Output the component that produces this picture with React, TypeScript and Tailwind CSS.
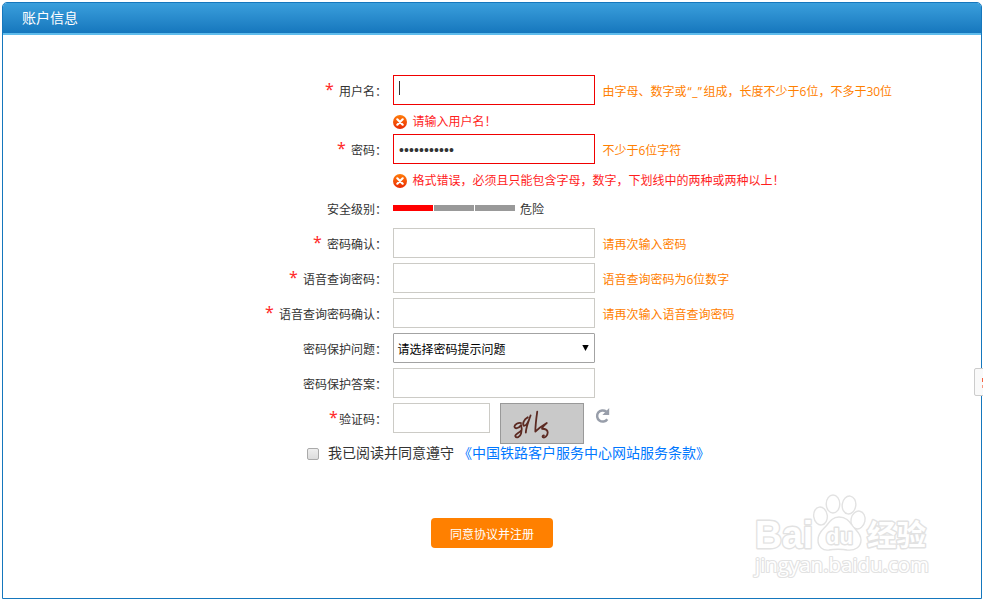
import type { ReactNode } from "react";

type RowProps = {
  label: string;
  required?: boolean;
  tight?: boolean;
  children: ReactNode;
};

function Row({ label, required, tight, children }: RowProps) {
  return (
    <div className="flex h-[35px] items-start">
      <div className="flex h-[30px] w-[384px] shrink-0 items-center justify-end whitespace-nowrap pt-[3px]">
        {required && (
          <span className={tight ? "mb-[5px] w-[10px] font-['Noto_Sans'] text-[16px] leading-none text-[#ff2a2a]" : "mb-[5px] w-[14px] font-['Noto_Sans'] text-[16px] leading-none text-[#ff2a2a]"}>*</span>
        )}
        <span>{label}</span>
      </div>
      <div className="ml-1.5 flex items-start">{children}</div>
    </div>
  );
}

function Hint({ children }: { children: ReactNode }) {
  return <span className="ml-[7.5px] flex h-[30px] items-center whitespace-pre pt-[3px] font-['Open_Sans','Noto_Sans_CJK_SC',sans-serif] text-[#ff8000]">{children}</span>;
}

function ErrorLine({ children }: { children: ReactNode }) {
  return (
    <div className="flex h-[29px] items-center pl-[390px] pt-[4px] text-[#ff1e1e]">
      <svg viewBox="0 0 14 14" className="mr-[5.5px] h-[14px] w-[14px]">
        <defs>
          <linearGradient id="err" x1="0" y1="0" x2="0" y2="1">
            <stop offset="0" stopColor="#ff7d0a" />
            <stop offset="1" stopColor="#ea2a04" />
          </linearGradient>
        </defs>
        <circle cx="7" cy="7" r="7" fill="url(#err)" />
        <path d="M4.3 4.3l5.4 5.4M9.7 4.3l-5.4 5.4" stroke="#fff" strokeWidth="2.2" strokeLinecap="round" />
      </svg>
      <span className="whitespace-nowrap">{children}</span>
    </div>
  );
}

function TextInput() {
  return <input type="text" className="h-[30px] w-[202px] border border-[#cccbc6] bg-white px-[5px] outline-none" />;
}

function Watermark() {
  return (
    <svg viewBox="0 0 190 96" className="pointer-events-none absolute left-[747px] top-[488px] h-[96px] w-[190px]" fill="#fff" stroke="#e2e2e2" strokeWidth="1.4" strokeLinejoin="round">
      <ellipse cx="73.5" cy="28" rx="6.8" ry="9" transform="rotate(-8 73.5 28)" />
      <ellipse cx="86" cy="16" rx="6.8" ry="9" />
      <ellipse cx="102" cy="17" rx="6.8" ry="9" transform="rotate(8 102 17)" />
      <ellipse cx="111" cy="32" rx="7" ry="9" transform="rotate(12 111 32)" />
      <path d="M92 29c-6 0-9 4-12 8-3 4-9 7-9 15 0 7 5 11 11 10 4-1 14-1 18 0 8 1 14-3 14-10 0-7-6-10-9-15-3-4-6-8-13-8z" />
      <g strokeWidth="2.8" style={{ paintOrder: "stroke" }}>
        <text x="8" y="60" fontSize="38" fontWeight="700" fontFamily="Liberation Sans" textLength="58" lengthAdjust="spacingAndGlyphs">Bai</text>
        <text x="79" y="56" fontSize="22" fontWeight="700" fontFamily="Liberation Sans" textLength="27" lengthAdjust="spacingAndGlyphs">du</text>
        <text x="120" y="58" fontSize="29" fontWeight="700" fontFamily="Noto Sans CJK SC" textLength="59" lengthAdjust="spacingAndGlyphs">经验</text>
      </g>
      <text x="8" y="84" fontSize="20" fontFamily="Open Sans" strokeWidth="2.2" textLength="174" lengthAdjust="spacingAndGlyphs" style={{ paintOrder: "stroke" }}>jingyan.baidu.com</text>
    </svg>
  );
}

export default function App() {
  return (
    <div className="relative h-[600px] w-[983px] overflow-hidden bg-white pl-[2px] pt-[2px] font-['Liberation_Sans','Noto_Sans_CJK_SC',sans-serif] text-[12px] leading-[18px] text-[#333]">
      <div className="h-[597px] w-[980px] overflow-hidden rounded-t-[5px] border border-[#1577bd]">
        {/* Title bar */}
        <div className="flex h-[32px] items-center border-b-2 border-[#5fbcec] bg-linear-to-b from-[#3a9fdc] to-[#1577bd] pl-[19px] text-[14px] text-white">
          账户信息
        </div>

        <form className="pt-[40px]">
          <div className="h-[30px]">
            <Row label="用户名：" required>
              <div className="flex h-[30px] w-[202px] border border-[#f00000] pl-[5px] pt-[5px]">
                <span className="h-[14px] w-px bg-[#333]" />
              </div>
              <Hint>由字母、数字或<span className="w-[17px] text-center tracking-[0.4px]">“_”</span>组成，长度不少于6位，不多于30位</Hint>
            </Row>
          </div>
          <ErrorLine>请输入用户名！</ErrorLine>

          <div className="h-[30px]">
            <Row label="密码：" required>
              <input
                type="password"
                defaultValue="abcdef12345"
                className="h-[30px] w-[202px] border border-[#f00000] px-[5px] pt-[2px] font-['Liberation_Sans'] text-[14px] tracking-[0.1px] outline-none"
              />
              <Hint>不少于6位字符</Hint>
            </Row>
          </div>
          <ErrorLine>格式错误，必须且只能包含字母，数字，下划线中的两种或两种以上！</ErrorLine>

          {/* Password strength */}
          <Row label="安全级别：">
            <div className="flex h-[30px] items-center">
              <div className="flex gap-px">
                <span className="h-[6px] w-[40px] bg-[#ff0000]" />
                <span className="h-[6px] w-[40px] bg-[#999]" />
                <span className="h-[6px] w-[40px] bg-[#999]" />
              </div>
              <span className="ml-[5px] pt-[3px]">危险</span>
            </div>
          </Row>

          <Row label="密码确认：" required>
            <TextInput />
            <Hint>请再次输入密码</Hint>
          </Row>
          <Row label="语音查询密码：" required>
            <TextInput />
            <Hint>语音查询密码为6位数字</Hint>
          </Row>
          <Row label="语音查询密码确认：" required>
            <TextInput />
            <Hint>请再次输入语音查询密码</Hint>
          </Row>
          <Row label="密码保护问题：">
            <button type="button" className="flex h-[30px] w-[202px] items-center justify-between rounded-[1px] border border-[#a3a3a3] pl-[3.5px] pr-[5.5px] text-black">
              <span className="pt-[3px]">请选择密码提示问题</span>
              <svg viewBox="0 0 7 6" className="mb-px h-[6px] w-[7px]">
                <path d="M0.3 0h6.4L3.5 6z" />
              </svg>
            </button>
          </Row>
          <Row label="密码保护答案：">
            <TextInput />
          </Row>
          <Row label="验证码：" required tight>
            <input type="text" className="h-[30px] w-[97px] border border-[#cccbc6] outline-none" />
            <svg viewBox="0 0 84 41" className="ml-[10px] h-[41px] w-[84px] border border-[#999] bg-[#c9c9c9]" fill="none" stroke="#5c2a22" strokeWidth="1.9" strokeLinecap="round" strokeLinejoin="round">
              <path d="M20 20c-3-1-7 2-7 4 1 3 5 1 7-2 1 3 1 6 0 9-1 4-5 5-6 3-1-2 3-3 6-6" />
              <path d="M27 14c-4 2-6 7-4 9 3 0 5-5 7-11-2 6-5 13-5 18" />
              <path d="M37 8c-1 7-2 14-2 21 3-3 7-6 12-9-2 2-4 3-5 6 3 0 6 1 6 4 0 3-3 6-5 5-1-1 0-2 1-2" />
            </svg>
            <svg viewBox="0 0 15 16" className="ml-[11px] mt-[5px] h-[16px] w-[15px]">
              <path d="M12.3 11.2A5.6 5.6 0 1 1 11.2 3.6" fill="none" stroke="#989eaa" strokeWidth="2.5" />
              <path d="M14.2 0v7H7.4z" fill="#989eaa" />
            </svg>
          </Row>

          {/* Agreement */}
          <div className="flex h-[30px] items-center pl-[304px] text-[14px]">
            <span className="mr-[9px] mt-[2px] h-[12px] w-[12px] rounded-[2px] border border-[#aaa] bg-linear-to-b from-[#eee] to-[#dcdcdc]" />
            <span>我已阅读并同意遵守</span>
            <a className="ml-[4px] text-[#0077ff]">《中国铁路客户服务中心网站服务条款》</a>
          </div>

          <div className="flex pl-[428px] pt-[50px]">
            <button type="button" className="h-[30px] w-[122px] rounded-[4px] bg-[#ff8000] pt-[3px] text-white">
              同意协议并注册
            </button>
          </div>
        </form>
      </div>

      <Watermark />

      {/* Side tab peeking in from the right edge */}
      <div className="absolute left-[974px] top-[368px] flex h-[28px] w-[12px] flex-col items-start gap-[3px] rounded-l-[2px] border border-[#ccc] bg-[#f9f9f9] pl-[7px] pt-[9px]">
        <span className="h-[4px] w-[2px] bg-[#f4603f]" />
        <span className="h-[3px] w-[2px] bg-[#f79a84]" />
      </div>
    </div>
  );
}
